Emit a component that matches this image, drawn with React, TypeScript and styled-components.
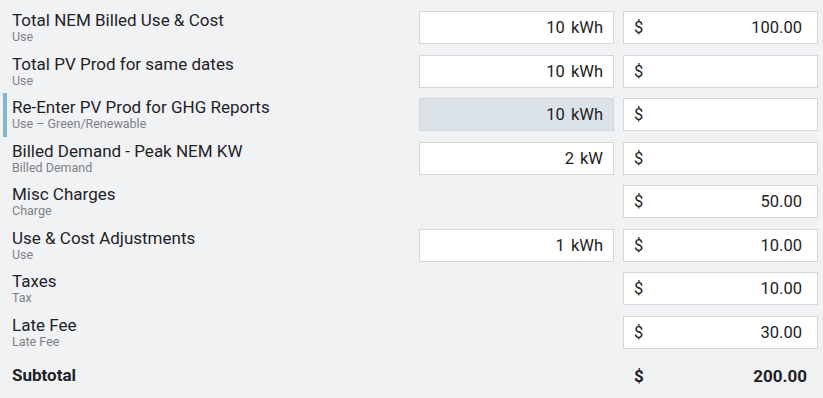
import React from 'react'
import styled, { createGlobalStyle } from 'styled-components'

const GlobalStyle = createGlobalStyle`
  html, body {
    margin: 0;
    padding: 0;
    background: #f1f2f4;
    font-family: Roboto, 'Liberation Sans', sans-serif;
  }
`

const Wrapper = styled.div`
  width: 823px;
  height: 398px;
  box-sizing: border-box;
  padding: 6px 5px 0 0;
  background: #f1f2f4;
`

const Row = styled.div<{ accent?: boolean }>`
  position: relative;
  display: grid;
  grid-template-columns: 1fr 195px 195px;
  column-gap: 9px;
  align-items: center;
  height: 43.5px;
  padding-left: 12px;

  ${({ accent }) =>
    accent &&
    `
    &::before {
      content: '';
      position: absolute;
      left: 3px;
      top: 0;
      bottom: 0;
      width: 4px;
      background: #7db9cc;
    }
  `}
`

const Label = styled.div`
  display: flex;
  flex-direction: column;
`

const Title = styled.div<{ bold?: boolean }>`
  font-size: 17px;
  font-weight: ${({ bold }) => (bold ? 700 : 400)};
  line-height: 19px;
  color: #1f2328;
`

const Sub = styled.div`
  font-size: 12.5px;
  line-height: 14px;
  color: #7d8187;
`

const Box = styled.div<{ disabled?: boolean }>`
  box-sizing: border-box;
  height: 33px;
  display: flex;
  align-items: center;
  border: 1px solid #d3d6da;
  background: ${({ disabled }) => (disabled ? '#dce3e8' : '#ffffff')};
  font-size: 16.5px;
  color: #222;
`

const UnitBox = styled(Box)`
  justify-content: flex-end;
  padding-right: 10px;
  word-spacing: 2px;
`

const CostBox = styled(Box)`
  justify-content: space-between;
  padding: 0 15px 0 10px;
`

const Total = styled.div`
  display: flex;
  justify-content: space-between;
  padding: 0 11px 0 11px;
  font-size: 17px;
  font-weight: 700;
  color: #1f2328;
`

interface Line {
  title: string
  sub: string
  unit?: string
  cost?: string
  disabled?: boolean
}

const lines: Line[] = [
  { title: 'Total NEM Billed Use & Cost', sub: 'Use', unit: '10 kWh', cost: '100.00' },
  { title: 'Total PV Prod for same dates', sub: 'Use', unit: '10 kWh', cost: '' },
  {
    title: 'Re-Enter PV Prod for GHG Reports',
    sub: 'Use – Green/Renewable',
    unit: '10 kWh',
    cost: '',
    disabled: true,
  },
  { title: 'Billed Demand - Peak NEM KW', sub: 'Billed Demand', unit: '2 kW', cost: '' },
  { title: 'Misc Charges', sub: 'Charge', cost: '50.00' },
  { title: 'Use & Cost Adjustments', sub: 'Use', unit: '1 kWh', cost: '10.00' },
  { title: 'Taxes', sub: 'Tax', cost: '10.00' },
  { title: 'Late Fee', sub: 'Late Fee', cost: '30.00' },
]

const App = () => {
  return (
    <Wrapper>
      <GlobalStyle />
      {lines.map((line, i) => (
        <Row key={i} accent={line.disabled}>
          <Label>
            <Title>{line.title}</Title>
            <Sub>{line.sub}</Sub>
          </Label>
          {line.unit ? (
            <UnitBox disabled={line.disabled}>{line.unit}</UnitBox>
          ) : (
            <div />
          )}
          <CostBox>
            <span>$</span>
            <span>{line.cost}</span>
          </CostBox>
        </Row>
      ))}
      <Row>
        <Title bold>Subtotal</Title>
        <div />
        <Total>
          <span>$</span>
          <span>200.00</span>
        </Total>
      </Row>
    </Wrapper>
  )
}

export default App
